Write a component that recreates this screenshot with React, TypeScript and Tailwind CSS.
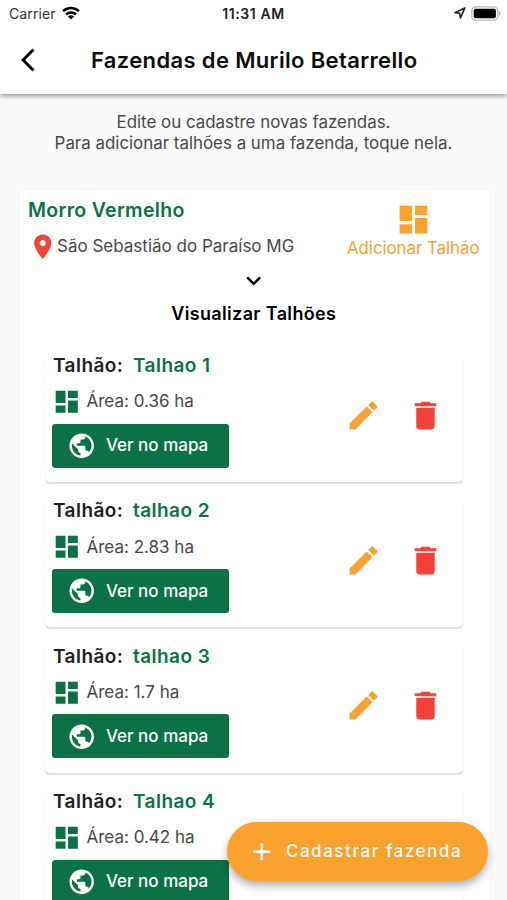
import type { ReactNode } from "react";

const icons = {
  back: "M11.67 3.87L9.9 2.1 0 12l9.9 9.9 1.77-1.77L3.54 12z",
  dashboard: "M3 13h8V3H3v10zm0 8h8v-6H3v6zm10 0h8V11h-8v10zm0-18v6h8V3h-8z",
  pin: "M12 2C8.13 2 5 5.13 5 9c0 5.25 7 13 7 13s7-7.75 7-13c0-3.87-3.13-7-7-7zm0 9.5c-1.38 0-2.5-1.12-2.5-2.5s1.12-2.5 2.5-2.5 2.5 1.12 2.5 2.5-1.12 2.5-2.5 2.5z",
  down: "M7.41 8.59L12 13.17l4.59-4.58L18 10l-6 6-6-6 1.41-1.41z",
  globe:
    "M12 2C6.48 2 2 6.48 2 12s4.48 10 10 10 10-4.48 10-10S17.52 2 12 2zm-1 17.93c-3.95-.49-7-3.85-7-7.93 0-.62.08-1.21.21-1.79L9 15v1c0 1.1.9 2 2 2v1.93zm6.9-2.54c-.26-.81-1-1.39-1.9-1.39h-1v-3c0-.55-.45-1-1-1H8v-2h2c.55 0 1-.45 1-1V7h2c1.1 0 2-.9 2-2v-.41c2.93 1.19 5 4.06 5 7.41 0 2.08-.8 3.97-2.1 5.39z",
  edit: "M3 17.25V21h3.75L17.81 9.94l-3.75-3.75L3 17.25zM20.71 7.04c.39-.39.39-1.02 0-1.41l-2.34-2.34c-.39-.39-1.02-.39-1.41 0l-1.83 1.83 3.75 3.75 1.83-1.83z",
  trash: "M6 19c0 1.1.9 2 2 2h8c1.1 0 2-.9 2-2V7H6v12zM19 4h-3.5l-1-1h-5l-1 1H5v2h14V4z",
  add: "M19 13h-6v6h-2v-6H5v-2h6V5h2v6h6v2z",
};

function Icon({ name, className }: { name: keyof typeof icons; className: string }) {
  return (
    <svg viewBox="0 0 24 24" fill="currentColor" className={`shrink-0 ${className}`}>
      <path d={icons[name]} />
    </svg>
  );
}

function Line({ className, children }: { className: string; children: ReactNode }) {
  return <div className={`whitespace-nowrap ${className}`}>{children}</div>;
}

const plots = [
  { name: "Talhao 1", area: "0.36" },
  { name: "talhao 2", area: "2.83" },
  { name: "talhao 3", area: "1.7" },
  { name: "Talhao 4", area: "0.42" },
];

function StatusBar() {
  return (
    <div className="grid h-[27px] grid-cols-3 items-center">
      <div className="flex items-center pl-[9px]">
        <span className="text-[14px] tracking-[0.1px] text-[#333]">Carrier</span>
        <svg viewBox="0 0 18 14" className="mb-[2px] ml-[6px] h-[14px] w-[18px]" fill="none" stroke="#000" strokeWidth="2.5">
          <path d="M1 5.2a11.5 11.5 0 0 1 16 0M4 8.5a7.2 7.2 0 0 1 10 0" />
          <path d="M9 13.6L5.9 10.6a4.5 4.5 0 0 1 6.2 0z" fill="#000" stroke="none" />
        </svg>
      </div>
      <span className="text-center text-[14px] font-semibold tracking-[0.6px] text-[#222]">11:31 AM</span>
      <div className="flex items-center justify-end pr-[6.5px] pb-px">
        <svg viewBox="0 0 12 12" className="mr-[5px] h-[12px] w-[12px]" fill="none" stroke="#222" strokeWidth="1.6" strokeLinejoin="round">
          <path d="M10.8 1L1 5.6l4.7.7.8 4.7z" />
        </svg>
        <svg viewBox="0 0 30 15" className="h-[15px] w-[30px]">
          <rect x="0.8" y="0.8" width="26" height="13.4" rx="4" fill="#fff" stroke="#bbb" strokeWidth="1.3" />
          <rect x="2.7" y="2.7" width="22.2" height="9.6" rx="2" fill="#000" />
          <path d="M28 5v5c2-.8 2-4.2 0-5z" fill="#aaa" />
        </svg>
      </div>
    </div>
  );
}

function PlotCard({ name, area }: { name: string; area: string }) {
  return (
    <div className="flex h-[132px] shrink-0 rounded-[5px] bg-white pl-[7px] shadow-[0_2px_1px_-0.5px_rgba(0,0,0,0.1),0_1px_2px_rgba(0,0,0,0.05)]">
      <div className="flex w-[290px] flex-col items-start">
        <Line className="mt-[3px] flex h-[26px] items-center pl-px text-[19px] font-semibold tracking-[0.45px] text-[#212121]">
          <span className="w-[80px]">Talhão:</span>
          <span className="text-[#0c7147]">{name}</span>
        </Line>
        <div className="flex h-[44px] items-center pt-px">
          <Icon name="dashboard" className="h-[29.5px] w-[29.5px] text-[#0c7147]" />
          <Line className="ml-[5px] pt-px text-[17px] text-[#484848]">Área: {area} ha</Line>
        </div>
        <button className="mt-[0.5px] flex h-[44px] w-[177px] items-center rounded-[3px] bg-[#0c7147] pl-[15px] text-white">
          <Icon name="globe" className="h-[29.4px] w-[29.4px]" />
          <Line className="ml-[9.5px] pt-px text-[17px] font-medium">Ver no mapa</Line>
        </button>
      </div>
      <div className="flex items-center pb-[2px]">
        <Icon name="edit" className="ml-[3px] h-[37px] w-[37px] text-[#f9a22f]" />
        <Icon name="trash" className="ml-[25px] h-[37px] w-[37px] text-[#f44336]" />
      </div>
    </div>
  );
}

export default function App() {
  return (
    <div className="relative flex h-[900px] w-[507px] flex-col overflow-hidden bg-[#fafafa] font-['Inter','Noto_Sans',sans-serif]">
      <header className="z-10 h-[94px] shrink-0 bg-white shadow-[0_2px_5px_rgba(0,0,0,0.4)]">
        <StatusBar />
        <div className="flex h-[66px] items-center pl-[21px]">
          <Icon name="back" className="h-[28px] w-[28px] text-black" />
          <h1 className="ml-[42px] text-[22px] font-semibold tracking-[0.35px] whitespace-nowrap text-[#0c0c0c]">Fazendas de Murilo Betarrello</h1>
        </div>
      </header>

      <div className="flex h-[96px] shrink-0 flex-col items-center pt-[18px] text-[16.9px] leading-[21px] text-[#484848]">
        <Line className="">Edite ou cadastre novas fazendas.</Line>
        <Line className="">Para adicionar talhões a uma fazenda, toque nela.</Line>
      </div>

      <main className="mr-[17.5px] ml-[19.5px] flex h-[760px] shrink-0 flex-col bg-white shadow-[0_0_3px_rgba(0,0,0,0.04)]">
        <div className="flex h-[78px] justify-between pr-[10px] pl-[8px]">
          <div>
            <Line className="mt-[8px] pl-[0.5px] text-[19.5px] leading-[25px] font-semibold tracking-[0.3px] text-[#0c7147]">Morro Vermelho</Line>
            <div className="mt-[8.5px] flex h-[30px] items-center">
              <Icon name="pin" className="h-[29.5px] w-[29.5px] text-[#f44336]" />
              <Line className="pt-px text-[17px] text-[#484848]">São Sebastião do Paraíso MG</Line>
            </div>
          </div>
          <div className="flex flex-col items-center pt-[11px] text-[#f9a22f]">
            <Icon name="dashboard" className="h-[37px] w-[37px]" />
            <Line className="text-[16.8px] leading-[20px]">Adicionar Talhão</Line>
          </div>
        </div>
        <div className="flex h-[82px] flex-col items-center pr-[1.5px] text-black">
          <Icon name="down" className="-mt-[2px] h-[29.4px] w-[29.4px]" />
          <Line className="mt-[7px] text-[18px] leading-[24px] font-semibold tracking-[0.35px]">Visualizar Talhões</Line>
        </div>
        <div className="flex flex-col gap-[13.4px] pr-[26.5px] pl-[25.5px]">
          {plots.map((plot) => (
            <PlotCard key={plot.name} name={plot.name} area={plot.area} />
          ))}
        </div>
      </main>

      <button className="absolute top-[822px] left-[227px] z-20 flex h-[59px] w-[261px] items-center rounded-full bg-[#f9a22f] pl-[19.5px] text-white shadow-[0_5px_8px_rgba(0,0,0,0.3)]">
        <Icon name="add" className="h-[29.4px] w-[29.4px]" />
        <Line className="ml-[10px] text-[17px] font-medium tracking-[1.55px]">Cadastrar fazenda</Line>
      </button>
    </div>
  );
}
